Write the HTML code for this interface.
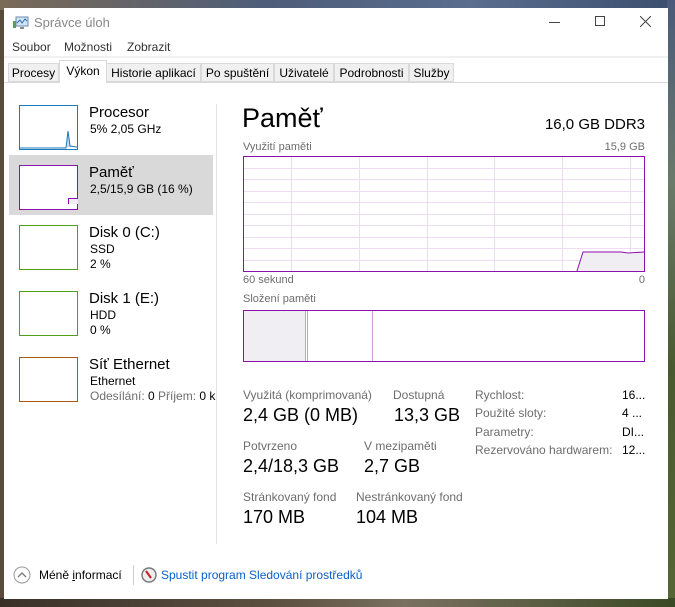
<!DOCTYPE html>
<html><head><meta charset="utf-8"><style>
*{margin:0;padding:0;box-sizing:border-box}
body{width:675px;height:607px;overflow:hidden;position:relative;font-family:"Liberation Sans",sans-serif;background:linear-gradient(90deg,#5a4a3a,#6a6a55 50%,#3d4a2a);}
.bgtop{position:absolute;left:0;top:0;width:675px;height:10px;background:linear-gradient(90deg,#7a6a58,#4d5d7a 40%,#5a6d8e 70%,#3b4e6e)}
.bgr{position:absolute;right:0;top:0;width:8px;height:607px;background:linear-gradient(180deg,#4a5a7a,#6a7a6a 30%,#4a5a30 60%,#556633)}
.bgb{position:absolute;left:0;bottom:0;width:675px;height:9px;background:linear-gradient(90deg,#3a3028,#5b5040 40%,#7a7060 60%,#3a4a25)}
.win{position:absolute;left:4px;top:8px;width:664px;height:591px;background:#fff}
.a{position:absolute;white-space:nowrap}
.g{color:#6d6d6d}
.tab{position:absolute;top:63px;height:19px;border:1px solid #d9d9d9;background:#f0f0f0;font-size:12px;padding:2px 0 0 0;text-align:center;color:#000}
.th{position:absolute;left:19px;width:59px;height:45px;border-width:1px;border-style:solid;background:#fff}
</style></head><body>
<div class="bgtop"></div><div class="bgr"></div><div class="bgb"></div>
<div class="win"></div>
<svg class="a" style="left:13px;top:16px" width="16" height="14" viewBox="0 0 16 14"><rect x="3" y="1" width="12" height="9" fill="#cfe4f5" stroke="#6a8aa8"/><polyline points="4,7 7,4 9,7 12,3 14,5" fill="none" stroke="#2a6fb0"/><rect x="0" y="5" width="3" height="7" fill="#5b9b5b"/><rect x="7" y="11" width="4" height="2" fill="#888"/></svg>
<div class="a g" style="left:34px;top:15px;font-size:13px;color:#888">Správce úloh</div>
<div class="a" style="left:549px;top:22px;width:11px;height:1px;background:#444"></div>
<div class="a" style="left:595px;top:16px;width:10px;height:10px;border:1px solid #444"></div>
<svg class="a" style="left:640px;top:16px" width="11" height="11"><path d="M0 0L11 11M11 0L0 11" stroke="#444"/></svg>
<div class="a" style="left:12px;top:40px;font-size:12px;color:#333">Soubor</div>
<div class="a" style="left:64px;top:40px;font-size:12px;color:#333">Možnosti</div>
<div class="a" style="left:127px;top:40px;font-size:12px;color:#333">Zobrazit</div>
<div class="a" style="left:4px;top:56px;width:664px;height:2px;background:#f0f0f0"></div>
<div class="a" style="left:4px;top:82px;width:664px;height:1px;background:#d9d9d9"></div>
<div class="tab" style="left:8px;width:51px">Procesy</div>
<div class="tab" style="left:59px;top:60px;height:23px;width:48px;background:#fff;border-bottom:none;padding-top:3px">Výkon</div>
<div class="tab" style="left:106px;width:95px">Historie aplikací</div>
<div class="tab" style="left:201px;width:73px">Po spuštění</div>
<div class="tab" style="left:274px;width:60px">Uživatelé</div>
<div class="tab" style="left:334px;width:75px">Podrobnosti</div>
<div class="tab" style="left:409px;width:45px">Služby</div>
<div class="a" style="left:9px;top:155px;width:204px;height:60px;background:#d9d9d9"></div>
<div class="a" style="left:216px;top:104px;width:1px;height:440px;background:#e3e3e3"></div>
<div class="th" style="top:105px;border-color:#1c7ab8"></div>
<svg class="a" style="left:20px;top:106px" width="57" height="43"><polyline points="0,42 46,42 48,25 50,40 57,41" fill="#c6dcef" stroke="#1c7ab8"/></svg>
<div class="th" style="top:165px;border-color:#8b12ae"></div>
<div class="a" style="left:68px;top:198px;width:10px;height:6px;border-top:1px solid #8b12ae;border-left:1px solid #8b12ae;background:#f1ebf3"></div>
<div class="th" style="top:225px;border-color:#4ea01a"></div>
<div class="th" style="top:291px;border-color:#4ea01a"></div>
<div class="th" style="top:357px;border-color:#a75b10"></div>
<div class="a" style="left:89px;top:104px;font-size:15px">Procesor</div>
<div class="a" style="left:90px;top:122px;font-size:12px">5% 2,05 GHz</div>
<div class="a" style="left:89px;top:164px;font-size:15px">Paměť</div>
<div class="a" style="left:90px;top:182px;font-size:12px">2,5/15,9 GB (16 %)</div>
<div class="a" style="left:89px;top:224px;font-size:15px">Disk 0 (C:)</div>
<div class="a" style="left:90px;top:242px;font-size:12px">SSD</div>
<div class="a" style="left:90px;top:257px;font-size:12px">2 %</div>
<div class="a" style="left:89px;top:290px;font-size:15px">Disk 1 (E:)</div>
<div class="a" style="left:90px;top:308px;font-size:12px">HDD</div>
<div class="a" style="left:90px;top:323px;font-size:12px">0 %</div>
<div class="a" style="left:89px;top:356px;font-size:15px">Síť Ethernet</div>
<div class="a" style="left:90px;top:374px;font-size:12px">Ethernet</div>
<div class="a" style="left:90px;top:389px;width:126px;overflow:hidden;font-size:12px"><span class="g">Odesílání:</span> 0 <span class="g">Příjem:</span> 0 kb</div>
<div class="a" style="left:242px;top:103px;font-size:27px">Paměť</div>
<div class="a" style="right:30px;top:116px;font-size:15px">16,0 GB DDR3</div>
<div class="a g" style="left:243px;top:141px;font-size:11px">Využití paměti</div>
<div class="a g" style="right:30px;top:141px;font-size:11px">15,9 GB</div>
<svg class="a" style="left:243px;top:156px" width="402" height="116">
<g stroke="#eedcf3" stroke-width="1">
<path d="M48.5 0V116M116.5 0V116M184.5 0V116M251.5 0V116M319.5 0V116M387.5 0V116"/>
<path d="M0 12.5H402M0 23.5H402M0 35.5H402M0 46.5H402M0 58.5H402M0 69.5H402M0 81.5H402M0 92.5H402M0 104.5H402"/>
</g>
<polygon points="334,115 340,96 378,96 385,97 401,96 401,115" fill="#f1eef3"/>
<polyline points="334,115 340,96 378,96 385,97 401,96" fill="none" stroke="#8b12ae"/>
<rect x="0.5" y="0.5" width="401" height="115" fill="none" stroke="#8b12ae"/>
</svg>
<div class="a g" style="left:243px;top:274px;font-size:11px">60 sekund</div>
<div class="a g" style="right:30px;top:274px;font-size:11px">0</div>
<div class="a g" style="left:243px;top:293px;font-size:11px">Složení paměti</div>
<svg class="a" style="left:243px;top:310px" width="402" height="52">
<rect x="1" y="1" width="62" height="50" fill="#f1eef3"/>
<path d="M62.5 1V51M64.5 1V51M129.5 1V51" stroke="#c9a0d6"/>
<rect x="0.5" y="0.5" width="401" height="51" fill="none" stroke="#8b12ae"/>
</svg>
<div class="a g" style="left:243px;top:388px;font-size:12px">Využitá (komprimovaná)</div>
<div class="a g" style="left:393px;top:388px;font-size:12px">Dostupná</div>
<div class="a" style="left:243px;top:405px;font-size:18px">2,4 GB (0 MB)</div>
<div class="a" style="left:394px;top:405px;font-size:18px">13,3 GB</div>
<div class="a g" style="left:243px;top:439px;font-size:12px">Potvrzeno</div>
<div class="a g" style="left:364px;top:439px;font-size:12px">V mezipaměti</div>
<div class="a" style="left:243px;top:456px;font-size:18px">2,4/18,3 GB</div>
<div class="a" style="left:364px;top:456px;font-size:18px">2,7 GB</div>
<div class="a g" style="left:243px;top:490px;font-size:12px">Stránkovaný fond</div>
<div class="a g" style="left:356px;top:490px;font-size:12px">Nestránkovaný fond</div>
<div class="a" style="left:243px;top:507px;font-size:18px">170 MB</div>
<div class="a" style="left:356px;top:507px;font-size:18px">104 MB</div>
<div class="a g" style="left:475px;top:386px;font-size:12px;line-height:18.3px">Rychlost:<br>Použité sloty:<br>Parametry:<br>Rezervováno hardwarem:</div>
<div class="a" style="left:622px;top:386px;font-size:12px;line-height:18.3px">16...<br>4 ...<br>DI...<br>12...</div>
<svg class="a" style="left:13px;top:566px" width="18" height="18"><circle cx="9" cy="9" r="8" fill="none" stroke="#999"/><polyline points="5,11 9,7 13,11" fill="none" stroke="#777" stroke-width="1.3"/></svg>
<div class="a" style="left:39px;top:568px;font-size:12px">Méně <u>i</u>nformací</div>
<div class="a" style="left:133px;top:565px;width:1px;height:20px;background:#ccc"></div>
<svg class="a" style="left:141px;top:567px" width="16" height="16"><circle cx="8" cy="8" r="7" fill="#eee" stroke="#777" stroke-width="1.4"/><path d="M5 4L10 11" stroke="#c02020" stroke-width="2"/></svg>
<div class="a" style="left:161px;top:568px;font-size:12px;color:#0a5fc9">Spustit program Sledování prostředků</div>
</body></html>
